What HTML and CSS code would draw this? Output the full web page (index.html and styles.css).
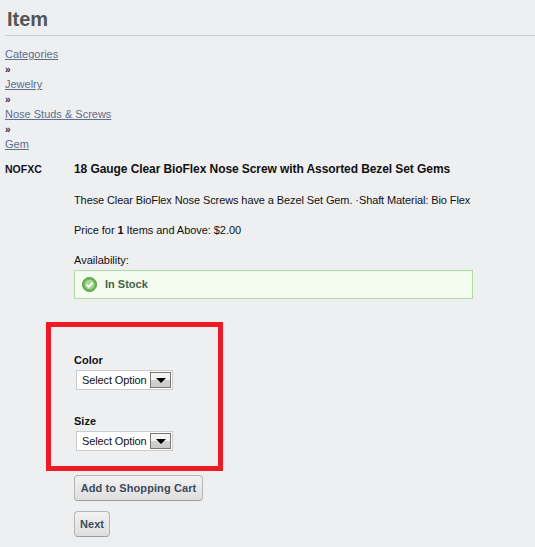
FILE: index.html
```html
<!DOCTYPE html>
<html lang="en">
<head>
<meta charset="utf-8">
<title>Item</title>
<link rel="stylesheet" href="styles.css">
</head>
<body>
<h1 class="page-title">Item</h1>
<nav class="crumbs">
  <a href="#">Categories</a>
  <span>»</span>
  <a href="#">Jewelry</a>
  <span>»</span>
  <a href="#">Nose Studs &amp; Screws</a>
  <span>»</span>
  <a href="#">Gem</a>
</nav>
<main class="item">
  <div class="sku">NOFXC</div>
  <div class="details">
    <h2 class="name">18 Gauge Clear BioFlex Nose Screw with Assorted Bezel Set Gems</h2>
    <p class="desc">These Clear BioFlex Nose Screws have a Bezel Set Gem. ·Shaft Material: Bio Flex</p>
    <p class="price">Price for <b>1</b> Items and Above: $2.00</p>
    <p class="avail-label">Availability:</p>
    <div class="stock">
      <svg class="stock-icon" width="15" height="15" viewBox="0 0 15 15" aria-hidden="true">
        <circle cx="7.5" cy="7.5" r="7" fill="#6cb356" stroke="#5a9a48"/>
        <circle cx="7.5" cy="7.5" r="4.8" fill="#a9d69a"/>
        <path d="M4.6 7.6l2.1 2.2 3.8-4.2" fill="none" stroke="#fff" stroke-width="1.8"/>
      </svg>
      <span>In Stock</span>
    </div>
    <div class="options">
      <label class="opt-label">Color</label>
      <div class="select"><span class="select-text">Select Option</span><span class="select-btn"><i></i></span></div>
      <label class="opt-label size">Size</label>
      <div class="select"><span class="select-text">Select Option</span><span class="select-btn"><i></i></span></div>
    </div>
    <button class="btn cart" type="button">Add to Shopping Cart</button>
    <button class="btn next" type="button">Next</button>
  </div>
</main>
<div class="highlight"></div>
</body>
</html>
```

FILE: styles.css
```css
html, body { margin: 0; padding: 0; }
body {
  position: relative;
  width: 535px;
  height: 547px;
  overflow: hidden;
  background: #eeeff1;
  font-family: "Liberation Sans", Arial, sans-serif;
  font-size: 11px;
  color: #111;
}
.page-title {
  margin: 0 0 0 5px;
  padding: 8px 0 5px 2px;
  height: 22px;
  font-size: 20px;
  line-height: 22px;
  font-weight: bold;
  color: #555;
  border-bottom: 1px solid #ccc;
}
.crumbs {
  display: flex;
  flex-direction: column;
  align-items: flex-start;
  margin: 11px 0 0 5px;
  line-height: 15px;
}
.crumbs a { color: #5f6e8c; }
.crumbs span { color: #1f2a5a; font-weight: bold; font-size: 10px; }
.item { display: flex; margin: 10px 0 0 5px; }
.sku { width: 69px; font-weight: bold; font-size: 10.5px; line-height: 15px; color: #112; }
.details { width: 399px; display: flex; flex-direction: column; align-items: flex-start; }
.name { margin: 0; font-size: 12px; line-height: 15px; font-weight: bold; color: #111; letter-spacing: -0.08px; }
.desc { margin: 16px 0 0; line-height: 15px; white-space: nowrap; letter-spacing: -0.1px; }
.price { margin: 15px 0 0; line-height: 15px; letter-spacing: -0.05px; }
.avail-label { margin: 15px 0 0; line-height: 15px; }
.stock {
  box-sizing: border-box;
  display: flex;
  align-items: center;
  gap: 8px;
  width: 399px;
  height: 29px;
  margin-top: 2px;
  padding-left: 7px;
  background: #f4fcf0;
  border: 1px solid #aedca5;
  font-weight: bold;
  color: #47604a;
}
.stock span { position: relative; top: -1px; }
.options { display: flex; flex-direction: column; align-items: flex-start; margin-top: 54px; }
.opt-label { font-weight: bold; line-height: 15px; color: #111; }
.opt-label.size { margin-top: 24px; }
.select {
  box-sizing: border-box;
  display: flex;
  align-items: center;
  justify-content: space-between;
  width: 97px;
  height: 20px;
  margin: 2px 0 0 2px;
  padding: 0 1px 0 5px;
  background: #fff;
  border: 1px solid #ccc;
  font-size: 11px;
  color: #111;
}
.select-text { letter-spacing: -0.12px; }
.select-btn {
  box-sizing: border-box;
  display: flex;
  align-items: center;
  justify-content: center;
  width: 21px;
  height: 16px;
  border: 1px solid #777;
  background: linear-gradient(#f6f6f6, #f2f2f2 50%, #d2d2d2 50%, #cacaca);
}
.select-btn i {
  width: 0;
  height: 0;
  border-left: 5px solid transparent;
  border-right: 5px solid transparent;
  border-top: 5px solid #000;
}
.btn {
  box-sizing: border-box;
  height: 26px;
  padding: 0;
  border: 1px solid #b5b5b5;
  border-bottom-color: #9c9c9c;
  border-radius: 4px;
  background: linear-gradient(#f2f2f2, #dedede);
  font-family: inherit;
  font-size: 11px;
  font-weight: bold;
  color: #3d4a5c;
}
.cart { margin-top: 24px; width: 129px; letter-spacing: 0.1px; }
.next { margin-top: 10px; width: 36px; }
.highlight {
  position: absolute;
  left: 46px;
  top: 322px;
  width: 167px;
  height: 139px;
  border: 5px solid #ed1c24;
}
```
